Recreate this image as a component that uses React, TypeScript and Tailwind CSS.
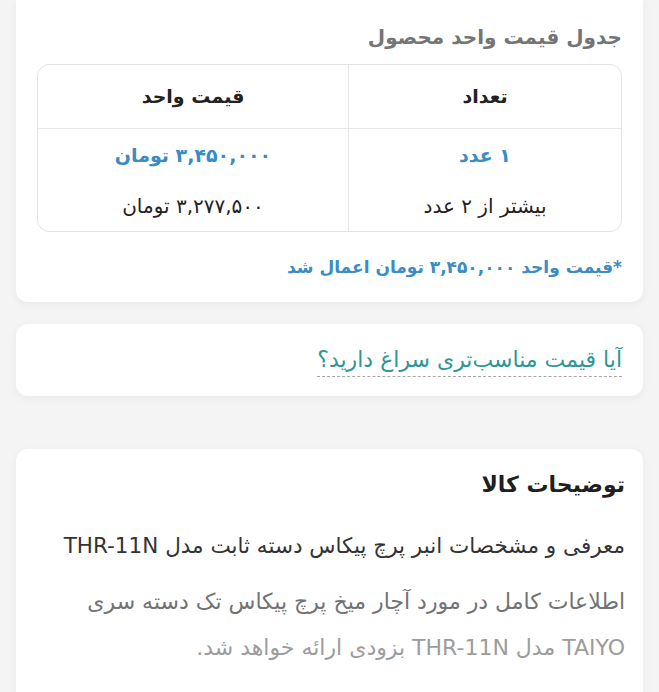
import React from "react";

const font = { fontFamily: '"DejaVu Sans", "Noto Sans", sans-serif' };

export default function App() {
  return (
    <div dir="rtl" style={font} className="min-h-screen bg-[#f4f4f4] px-4 pb-10">
      {/* Card 1 */}
      <div className="rounded-b-xl bg-white px-[21px] pt-[20px] pb-[22px] shadow-[0_2px_10px_rgba(0,0,0,0.05)]">
        <h2 className="text-[20px] font-bold leading-[34px] text-[#757575]">جدول قیمت واحد محصول</h2>
        <div className="mt-[10px] overflow-hidden rounded-xl border border-[#e3e3e3]">
          <div className="grid grid-cols-[273px_1fr] border-b border-[#e6e6e6]">
            <div className="flex h-[63px] items-center justify-center border-l border-[#e6e6e6] text-[19px] font-bold text-[#222]">تعداد</div>
            <div className="flex h-[63px] items-center justify-center text-[19px] font-bold text-[#222]">قیمت واحد</div>
          </div>
          <div className="grid grid-cols-[273px_1fr]">
            <div className="flex flex-col border-l border-[#e6e6e6]">
              <div className="flex h-[51px] items-center justify-center pt-[2px] text-[19px] font-bold text-[#3a8cc2]">۱ عدد</div>
              <div className="flex h-[51px] items-center justify-center text-[20px] text-[#222]">بیشتر از ۲ عدد</div>
            </div>
            <div className="flex flex-col">
              <div className="flex h-[51px] items-center justify-center pt-[2px] text-[19px] font-bold text-[#3a8cc2]">۳,۴۵۰,۰۰۰ تومان</div>
              <div className="flex h-[51px] items-center justify-center text-[20px] text-[#222]">۳,۲۷۷,۵۰۰ تومان</div>
            </div>
          </div>
        </div>
        <p className="mt-[22px] text-[17px] font-bold leading-[26px] text-[#3a8cc2]">*قیمت واحد ۳,۴۵۰,۰۰۰ تومان اعمال شد</p>
      </div>

      {/* Card 2 */}
      <div className="mt-[22px] flex h-[72px] items-center rounded-xl bg-white px-[21px] shadow-[0_2px_10px_rgba(0,0,0,0.05)]">
        <span className="mt-[2px] border-b border-dashed border-[#a8a8a8] pb-[1px] text-[22px] leading-[30px] text-[#2f9696]">آیا قیمت مناسب‌تری سراغ دارید؟</span>
      </div>

      {/* Card 3 */}
      <div className="mt-[53px] rounded-t-xl bg-white pl-[21px] pr-[18px] pt-[20px] pb-[30px] shadow-[0_2px_10px_rgba(0,0,0,0.05)]">
        <h3 className="text-[22px] font-bold leading-[32px] text-[#1f1f1f]">توضیحات کالا</h3>
        <p className="mt-[29px] whitespace-nowrap text-[21.5px] leading-[32px] text-[#333]">معرفی و مشخصات انبر پرچ پیکاس دسته ثابت مدل THR-11N</p>
        <p className="mt-[17px] whitespace-nowrap text-[22px] leading-[46px]">
          <span className="text-[#737373]">اطلاعات کامل در مورد آچار میخ پرچ پیکاس تک دسته سری</span>
          <br />
          <span className="text-[#9c9c9c]">TAIYO مدل THR-11N بزودی ارائه خواهد شد.</span>
        </p>
      </div>
    </div>
  );
}
